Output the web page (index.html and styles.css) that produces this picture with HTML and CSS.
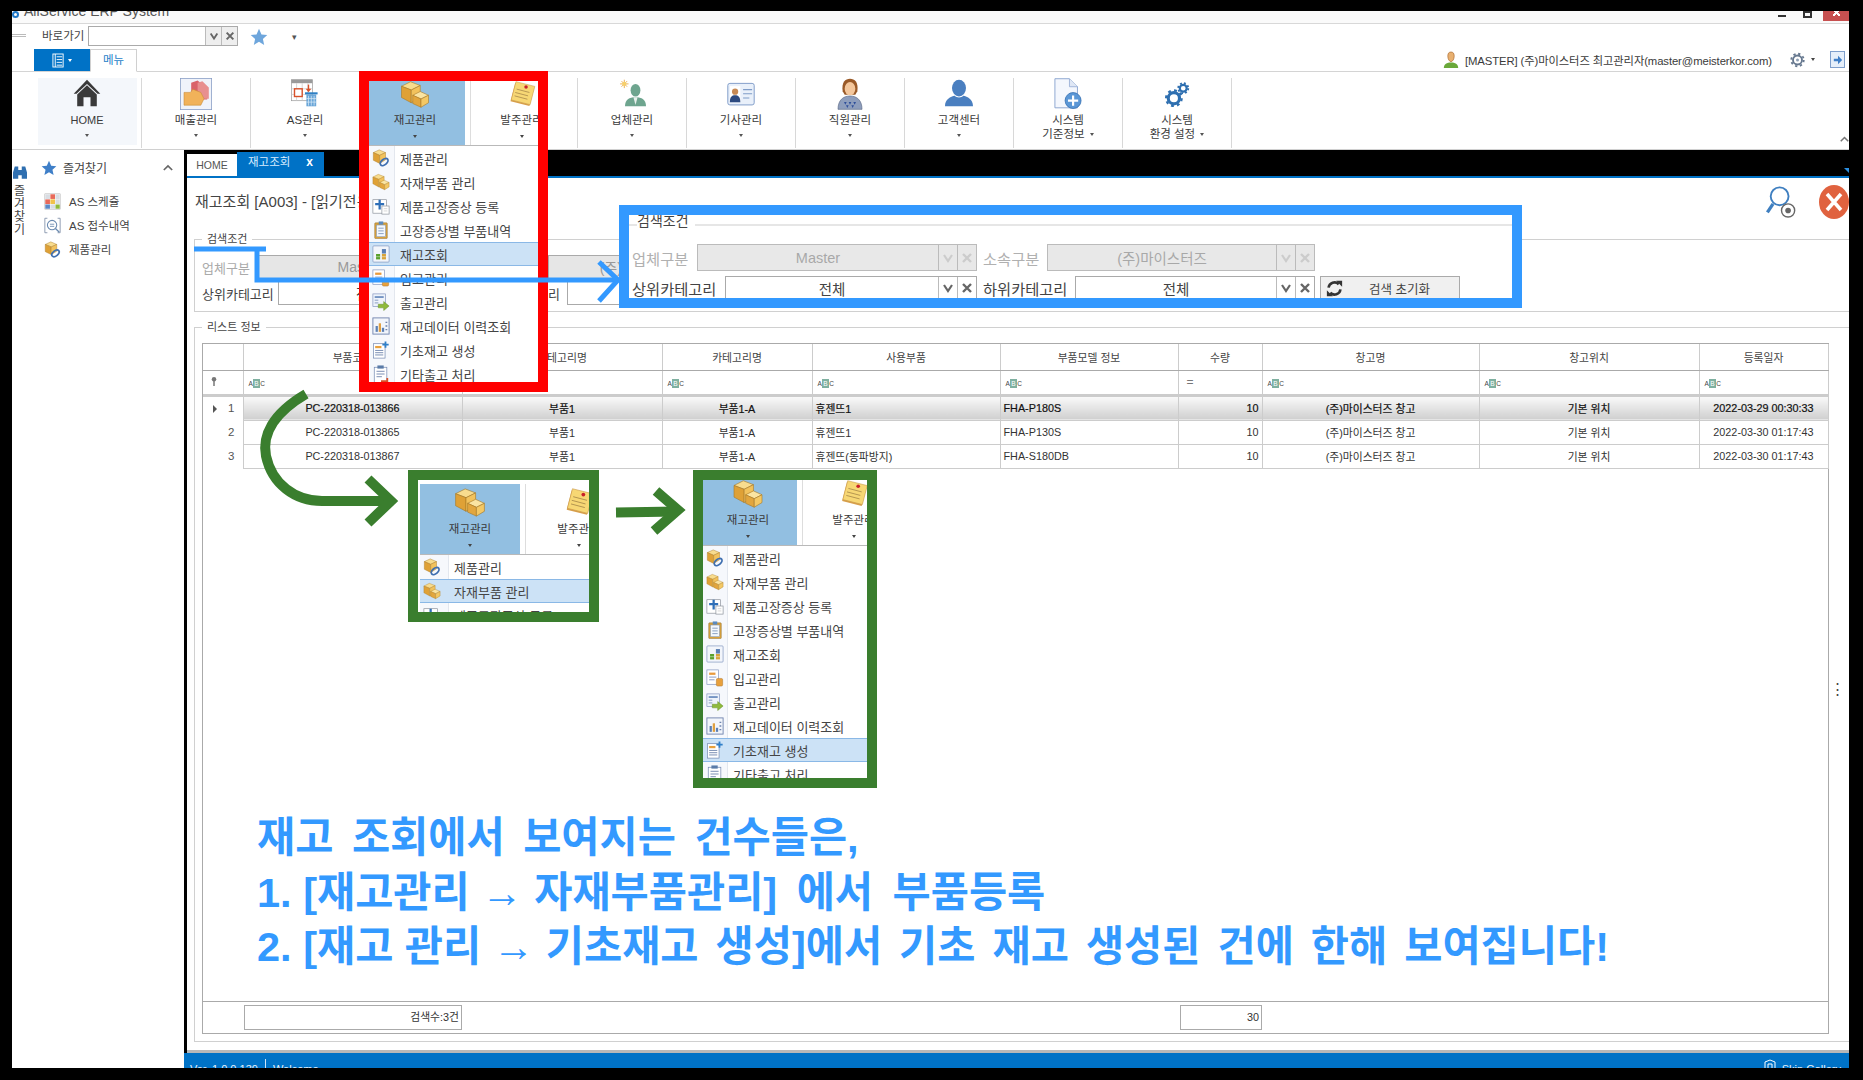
FILE: index.html
```html
<!DOCTYPE html>
<html lang="ko">
<head>
<meta charset="utf-8">
<title>AllService ERP System</title>
<link rel="stylesheet" href="styles.css">
</head>
<body>
<svg class="defs" aria-hidden="true">
  <symbol id="boxes" viewBox="0 0 40 36">
    <polygon points="14,1 27,6 15,12 2,7" fill="#f8dc8e" stroke="#a97a28" stroke-width=".8"/>
    <polygon points="2,7 15,12 15,29 2,22" fill="#dfa136" stroke="#a97a28" stroke-width=".8"/>
    <polygon points="15,12 27,6 27,22 15,29" fill="#f2c25c" stroke="#a97a28" stroke-width=".8"/>
    <polygon points="27,14 38,19 28,24 17,19" fill="#fae4a2" stroke="#a97a28" stroke-width=".8"/>
    <polygon points="17,19 28,24 28,35 17,30" fill="#e2a63e" stroke="#a97a28" stroke-width=".8"/>
    <polygon points="28,24 38,19 38,29 28,35" fill="#f4c864" stroke="#a97a28" stroke-width=".8"/>
  </symbol>
  <symbol id="note" viewBox="0 0 40 40">
    <polygon points="10,3 38,10 31,37 3,30" fill="#d89f4a"/>
    <polygon points="11,1 39,8 32,35 4,28" fill="#f7d774" stroke="#c8964a" stroke-width=".8"/>
    <path d="M12 12l19 5M10 17l19 5M9 22l19 5" stroke="#a98a4a" stroke-width="1.2"/>
    <circle cx="26" cy="9" r="2.6" fill="#c8202a"/>
  </symbol>
  <symbol id="home" viewBox="0 0 40 40">
    <path d="M20 1L39 21h-4L20 7 5 21H1z" fill="#3a3a3a"/>
    <path d="M6 22L20 9l14 13v17H25V26H15v13H6z" fill="#3a3a3a"/>
  </symbol>
  <symbol id="sales" viewBox="0 0 40 40">
    <rect x=".5" y=".5" width="39" height="39" fill="#f0f3fa" stroke="#8b9fc6"/>
    <path d="M14 6l8-3 12 10v14H14z" fill="#d9636a"/>
    <path d="M22 6l6-2 8 8v14H22z" fill="#e88f8f"/>
    <path d="M5 18h8l3-4 10 4 4 8-4 8H5z" fill="#f1b25a" stroke="#c88a35" stroke-width=".7"/>
  </symbol>
  <symbol id="as" viewBox="0 0 40 40">
    <rect x=".5" y="1" width="30" height="30" fill="#fff" stroke="#9a9a9a"/>
    <rect x=".5" y="1" width="30" height="5" fill="#9a9a9a"/>
    <path d="M8 6v25M16 6v25M24 6v25M1 14h29M1 22h29" stroke="#c8c8c8"/>
    <rect x="5" y="14" width="11" height="11" fill="#fff" stroke="#d8512a" stroke-width="2"/>
    <path d="M25 8v8" stroke="#d8512a" stroke-width="2"/>
    <polygon points="21,14 29,14 25,19" fill="#d8512a"/>
    <rect x="20" y="19" width="18" height="3" fill="#2d7fc4"/>
    <rect x="22" y="22" width="14" height="17" fill="#6aa6d8"/>
    <path d="M25 24v14M29 24v14M33 24v14M22 28h14M22 33h14" stroke="#dcecf8"/>
  </symbol>
  <symbol id="biz" viewBox="0 0 40 40">
    <path d="M9 1v12M3 7h12M5 3l8 8M13 3l-8 8" stroke="#e9a33d" stroke-width="1.2"/>
    <circle cx="9" cy="7" r="3" fill="#f6d06b"/>
    <ellipse cx="25" cy="16" rx="7" ry="9" fill="#6ea58f"/>
    <path d="M10 39c0-10 6-13 15-13s15 3 15 13z" fill="#6ea58f"/>
    <path d="M22 26h6l-3 11z" fill="#e8f0ec"/>
  </symbol>
  <symbol id="driver" viewBox="0 0 40 36">
    <rect x="1" y="2" width="38" height="31" rx="3" fill="#e9f0fa" stroke="#7f9cc8" stroke-width="1.4"/>
    <rect x="4" y="6" width="15" height="23" fill="#fff"/>
    <circle cx="11.500" cy="14" r="4.500" fill="#c78a55"/>
    <path d="M4 29c0-8 3-10 7.500-10S19 21 19 29z" fill="#2d4a80"/>
    <path d="M23 11h13M23 17h13M23 23h9" stroke="#7f9cc8" stroke-width="1.5"/>
  </symbol>
  <symbol id="staff" viewBox="0 0 40 48">
    <path d="M9 20C7 6 13 1 20 1s13 5 11 19l-3 5H12z" fill="#9a5a28"/>
    <ellipse cx="20" cy="16" rx="8" ry="10" fill="#f4c79c"/>
    <path d="M2 47c0-14 8-20 18-20s18 6 18 20z" fill="#8d9dbc" stroke="#5c6a86"/>
    <path d="M11 36l2 4 2-4zm7 0l2 4 2-4zm7 0l2 4 2-4zM14 41l2 4 2-4zm8 0l2 4 2-4z" fill="#2f4f9a"/>
  </symbol>
  <symbol id="customer" viewBox="0 0 40 40">
    <ellipse cx="20" cy="13" rx="10" ry="12" fill="#4a7fc0"/>
    <path d="M0 39c0-10 8-14 14-15 2 3 10 3 12 0 6 1 14 5 14 15z" fill="#4a7fc0"/>
  </symbol>
  <symbol id="sysdoc" viewBox="0 0 40 44">
    <path d="M2 1h20l11 11v29H2z" fill="#f4f7fd" stroke="#8ba4cf" stroke-width="1.300"/>
    <path d="M22 1v11h11" fill="#dfe7f5" stroke="#8ba4cf"/>
    <circle cx="27" cy="31" r="11" fill="#5b97d6" stroke="#2f6aae"/>
    <path d="M27 24v14M20 31h14" stroke="#fff" stroke-width="3"/>
  </symbol>
  <symbol id="gears" viewBox="0 0 40 40">
    <circle cx="15" cy="26" r="9" fill="none" stroke="#2e6fb0" stroke-width="5"/>
    <circle cx="15" cy="26" r="12.500" fill="none" stroke="#2e6fb0" stroke-width="3.500" stroke-dasharray="4.500 5.300"/>
    <circle cx="30" cy="10" r="5.500" fill="none" stroke="#2e6fb0" stroke-width="3.500"/>
    <circle cx="30" cy="10" r="8" fill="none" stroke="#2e6fb0" stroke-width="3" stroke-dasharray="3 3.300"/>
  </symbol>
  <symbol id="box-link" viewBox="0 0 40 40">
    <polygon points="16,2 30,8 17,14 3,8" fill="#f8dc8e" stroke="#a97a28"/>
    <polygon points="3,8 17,14 17,32 3,25" fill="#dfa136" stroke="#a97a28"/>
    <polygon points="17,14 30,8 30,24 17,32" fill="#f2c25c" stroke="#a97a28"/>
    <ellipse cx="27" cy="29" rx="10" ry="6" transform="rotate(-40 27 29)" fill="none" stroke="#3f6fb0" stroke-width="4"/>
  </symbol>
  <symbol id="add-grid" viewBox="0 0 40 40">
    <rect x="2" y="6" width="30" height="30" fill="#fff" stroke="#8a8f99" stroke-width="1.500"/>
    <rect x="22" y="20" width="16" height="18" fill="#fff" stroke="#8a8f99" stroke-width="1.500"/>
    <path d="M26 26h8M26 31h8" stroke="#a8a8a8"/>
    <path d="M17 6v22M7 16h20" stroke="#2f6fb8" stroke-width="5"/>
  </symbol>
  <symbol id="clip" viewBox="0 0 40 40">
    <rect x="6" y="4" width="28" height="35" rx="2" fill="#d9a23c" stroke="#8a6a2a"/>
    <rect x="10" y="9" width="20" height="26" fill="#f4f8fd" stroke="#6e8bb5"/>
    <rect x="15" y="1" width="10" height="7" fill="#5a8ac0"/>
    <path d="M14 16h12M14 22h12M14 28h12" stroke="#5a7ba8" stroke-width="1.500"/>
  </symbol>
  <symbol id="stock" viewBox="0 0 40 40">
    <rect x="2" y="2" width="36" height="36" rx="2" fill="#f2f5fb" stroke="#7f93bd" stroke-width="1.500"/>
    <rect x="9" y="20" width="9" height="12" fill="#5aa02c"/>
    <rect x="22" y="9" width="9" height="10" fill="#5b7fb4"/>
    <rect x="22" y="20" width="9" height="12" fill="#d8a33a"/>
    <path d="M9 26h9M22 26h9" stroke="#fff"/>
  </symbol>
  <symbol id="inbound" viewBox="0 0 40 40">
    <rect x="2" y="2" width="26" height="32" fill="#fff" stroke="#7f93bd" stroke-width="1.500"/>
    <rect x="7" y="8" width="14" height="5" fill="#e89a3c"/>
    <path d="M7 18h16M7 24h12" stroke="#7f93bd" stroke-width="2"/>
    <rect x="23" y="21" width="14" height="17" rx="3" fill="#e8a03c" stroke="#a86e20"/>
  </symbol>
  <symbol id="outbound" viewBox="0 0 40 40">
    <rect x="2" y="2" width="28" height="28" fill="#eef3fb" stroke="#7f93bd" stroke-width="1.500"/>
    <rect x="6" y="7" width="20" height="4" fill="#6f8fc0"/>
    <path d="M6 16h8M6 22h8" stroke="#7f93bd" stroke-width="2"/>
    <path d="M14 25h12v-6l12 10-12 10v-6H14z" fill="#8fba3c" stroke="#5f8a20"/>
  </symbol>
  <symbol id="chart" viewBox="0 0 40 40">
    <rect x="2" y="2" width="36" height="36" fill="#f2f5fb" stroke="#6e83ad" stroke-width="2"/>
    <rect x="8" y="20" width="5" height="13" fill="#5b7fb4"/>
    <rect x="15" y="14" width="5" height="19" fill="#e0a040"/>
    <rect x="22" y="24" width="5" height="9" fill="#5b7fb4"/>
    <path d="M30 12h4M30 20h4M30 28h4" stroke="#6e83ad" stroke-width="3"/>
  </symbol>
  <symbol id="newdoc" viewBox="0 0 40 40">
    <rect x="3" y="6" width="26" height="32" fill="#fff" stroke="#6e83ad" stroke-width="1.500"/>
    <rect x="7" y="11" width="14" height="5" fill="#e8a03c"/>
    <path d="M7 21h18M7 26h18M7 31h18" stroke="#6e83ad" stroke-width="2"/>
    <path d="M30 1v14M23 8h14" stroke="#2f7fc8" stroke-width="4"/>
  </symbol>
  <symbol id="etcdoc" viewBox="0 0 40 40">
    <rect x="5" y="5" width="28" height="34" fill="#fff" stroke="#6e83ad" stroke-width="1.500"/>
    <rect x="12" y="1" width="14" height="7" fill="#5a7ba8"/>
    <path d="M10 14h18M10 20h18M10 26h12" stroke="#6e83ad" stroke-width="2"/>
    <path d="M20 36h14v-7" fill="none" stroke="#d8512a" stroke-width="4"/>
  </symbol>
  <symbol id="cal" viewBox="0 0 40 40">
    <rect x="2" y="2" width="36" height="36" fill="#fff" stroke="#9a9a9a"/>
    <rect x="3" y="3" width="11" height="11" fill="#d9dde3"/><rect x="15" y="3" width="11" height="11" fill="#e86a5a"/><rect x="27" y="3" width="10" height="11" fill="#d9dde3"/>
    <rect x="3" y="15" width="11" height="11" fill="#e86a5a"/><rect x="15" y="15" width="11" height="11" fill="#f2c24a"/><rect x="27" y="15" width="10" height="11" fill="#d9dde3"/>
    <rect x="3" y="27" width="11" height="10" fill="#5a8ac8"/><rect x="15" y="27" width="11" height="10" fill="#d9dde3"/><rect x="27" y="27" width="10" height="10" fill="#8fba3c"/>
  </symbol>
  <symbol id="recv" viewBox="0 0 40 40">
    <path d="M8 3H2v34h6M32 3h6v34h-6" fill="none" stroke="#7f8fa8" stroke-width="2"/>
    <circle cx="19" cy="19" r="11" fill="#fff" stroke="#6a8ab0" stroke-width="2.500"/>
    <path d="M14 17h10M14 22h10" stroke="#6a8ab0" stroke-width="2"/>
    <path d="M27 27l9 9" stroke="#6a8ab0" stroke-width="3"/>
  </symbol>
  <symbol id="star" viewBox="0 0 24 24">
    <polygon points="12,1 15.300,8.500 23,9.300 17.200,14.600 18.900,22.500 12,18.400 5.100,22.500 6.800,14.600 1,9.300 8.700,8.500" fill="currentColor"/>
  </symbol>
  <symbol id="chev" viewBox="0 0 12 12">
    <path d="M2 3l4 6 4-6" fill="none" stroke="currentColor" stroke-width="2.200"/>
  </symbol>
  <symbol id="cross" viewBox="0 0 12 12">
    <path d="M2 2l8 8M10 2l-8 8" fill="none" stroke="currentColor" stroke-width="2.400"/>
  </symbol>
  <symbol id="refresh" viewBox="0 0 20 20">
    <path d="M3 9a7 7 0 0 1 12-4" fill="none" stroke="#333" stroke-width="3"/>
    <polygon points="12,1 19,1 19,8" fill="#333"/>
    <path d="M17 11a7 7 0 0 1-12 4" fill="none" stroke="#333" stroke-width="3"/>
    <polygon points="8,19 1,19 1,12" fill="#333"/>
  </symbol>
</svg>

<div class="screen">
  <header class="titlebar">
    <span class="app-dot"></span>
    <span class="app-name">AllService ERP System</span>
    <span class="win-min"></span>
    <span class="win-max"></span>
    <span class="win-close"></span>
  </header>

  <div class="quick">
    <span class="grip"></span>
    <span class="quick-label">바로가기</span>
    <div class="quick-combo">
      <span class="quick-input"></span>
      <span class="quick-btn"><svg class="ico-10"><use href="#chev"/></svg></span>
      <span class="quick-btn"><svg class="ico-10"><use href="#cross"/></svg></span>
    </div>
    <svg class="quick-star"><use href="#star"/></svg>
    <span class="quick-more">▾</span>
  </div>

  <div class="tabbar">
    <span class="tab-app">
      <svg class="tab-app-ico" viewBox="0 0 14 16"><rect x="1" y="1" width="11" height="14" fill="none" stroke="#fff"/><path d="M3.500 1v14M5 4h6M5 7h6M5 10h6M5 13h6" stroke="#fff"/></svg>
      <i class="tab-app-arrow"></i>
    </span>
    <span class="tab-menu">메뉴</span>
    <div class="userbox">
      <svg class="user-ico" viewBox="0 0 20 22"><path d="M6 6c0-4 2-5 4-5s4 1 4 5-2 7-4 7-4-3-4-7z" fill="#e8b070" stroke="#a8662a" stroke-width=".8"/><path d="M1 21c0-5 4-7 9-7s9 2 9 7z" fill="#6aa83a"/></svg>
      <span class="user-text">[MASTER] (주)마이스터즈 최고관리자(master@meisterkor.com)</span>
      <svg class="gear-ico" viewBox="0 0 20 20"><circle cx="10" cy="10" r="6" fill="none" stroke="#66788f" stroke-width="2.500"/><circle cx="10" cy="10" r="8.300" fill="none" stroke="#66788f" stroke-width="2.500" stroke-dasharray="3 3.500"/><circle cx="10" cy="10" r="2" fill="#8fa0b5"/></svg>
      <i class="gear-arrow"></i>
      <span class="login-btn"><svg class="login-ico" viewBox="0 0 12 12"><path d="M1 4.500h5V1l5 5-5 5V7.500H1z" fill="#3f7fc8"/></svg></span>
    </div>
  </div>

  <nav class="ribbon">
    <div class="rib-item rib-home"><svg class="rib-ico rib-ico-m"><use href="#home"/></svg><span class="rib-label">HOME</span><i class="rib-arrow"></i></div>
    <div class="rib-item"><svg class="rib-ico"><use href="#sales"/></svg><span class="rib-label">매출관리</span><i class="rib-arrow"></i></div>
    <div class="rib-item"><svg class="rib-ico rib-ico-m"><use href="#as"/></svg><span class="rib-label">AS관리</span><i class="rib-arrow"></i></div>
    <div class="rib-item"></div>
    <div class="rib-item"></div>
    <div class="rib-item"><svg class="rib-ico rib-ico-m"><use href="#biz"/></svg><span class="rib-label">업체관리</span><i class="rib-arrow"></i></div>
    <div class="rib-item"><svg class="rib-ico rib-ico-s"><use href="#driver"/></svg><span class="rib-label">기사관리</span><i class="rib-arrow"></i></div>
    <div class="rib-item"><svg class="rib-ico"><use href="#staff"/></svg><span class="rib-label">직원관리</span><i class="rib-arrow"></i></div>
    <div class="rib-item"><svg class="rib-ico rib-ico-m"><use href="#customer"/></svg><span class="rib-label">고객센터</span><i class="rib-arrow"></i></div>
    <div class="rib-item"><svg class="rib-ico"><use href="#sysdoc"/></svg><span class="rib-label">시스템</span><span class="rib-label">기준정보 <i class="rib-arrow-in"></i></span></div>
    <div class="rib-item"><svg class="rib-ico rib-ico-s"><use href="#gears"/></svg><span class="rib-label">시스템</span><span class="rib-label">환경 설정 <i class="rib-arrow-in"></i></span></div>
    <svg class="rib-collapse" viewBox="0 0 12 8"><path d="M1 7l5-5 5 5" fill="none" stroke="#777" stroke-width="2"/></svg>
  </nav>

  <div class="work">
    <aside class="side">
      <div class="side-strip">
        <svg class="binoc" viewBox="0 0 16 16"><path d="M0 15V8l2-7h4v14zM16 15V8l-2-7h-4v14zM6 5h4v6H6z" fill="#2f6fb0"/></svg>
        <span>즐</span><span>겨</span><span>찾</span><span>기</span>
      </div>
      <div class="side-panel">
        <div class="side-head">
          <svg class="side-star"><use href="#star"/></svg>
          <span class="side-title">즐겨찾기</span>
          <svg class="side-up" viewBox="0 0 12 8"><path d="M1 7l5-5 5 5" fill="none" stroke="#666" stroke-width="2"/></svg>
        </div>
        <ul class="side-list">
          <li><svg class="side-ico"><use href="#cal"/></svg>AS 스케쥴</li>
          <li><svg class="side-ico"><use href="#recv"/></svg>AS 접수내역</li>
          <li><svg class="side-ico"><use href="#box-link"/></svg>제품관리</li>
        </ul>
      </div>
    </aside>

    <main class="main">
      <div class="doc-tabs">
        <span class="doc-tab">HOME</span>
        <span class="doc-tab doc-tab-on">재고조회<b class="doc-x">x</b></span>
        <i class="doc-mark"></i>
      </div>
      <div class="pane">
        <div class="pane-head">
          <h1 class="pane-title">재고조회 [A003] - [읽기전용]</h1>
          <div class="pane-tools">
            <svg class="tool-search" viewBox="0 0 34 34"><circle cx="15" cy="11" r="9.500" fill="none" stroke="#3f7fc0" stroke-width="2"/><path d="M8 19L2 28" stroke="#3f7fc0" stroke-width="3.500"/><circle cx="24" cy="26" r="7" fill="#fff" stroke="#666" stroke-width="1.500"/><circle cx="24" cy="26" r="3" fill="#666"/></svg>
            <svg class="tool-close" viewBox="0 0 30 34"><ellipse cx="15" cy="17" rx="15" ry="17" fill="#e0623f"/><path d="M8 9l14 16M22 9L8 25" stroke="#fff" stroke-width="3.500"/></svg>
          </div>
        </div>

        <fieldset class="group">
          <legend>검색조건</legend>
          <div class="form-row">
            <label class="flabel flabel-off flabel-1">업체구분</label>
            <div class="fld fld-off fld-a"><span class="fld-val">Master</span><span class="fld-btn"><svg class="ico-10"><use href="#chev"/></svg></span><span class="fld-btn"><svg class="ico-10"><use href="#cross"/></svg></span></div>
            <label class="flabel flabel-2"></label>
            <div class="fld fld-off fld-b"><span class="fld-val">(주)마이스터즈</span></div>
          </div>
          <div class="form-row">
            <label class="flabel flabel-3">상위카테고리</label>
            <div class="fld fld-c"><span class="fld-val">전체</span><span class="fld-btn"><svg class="ico-10"><use href="#chev"/></svg></span><span class="fld-btn"><svg class="ico-10"><use href="#cross"/></svg></span></div>
            <label class="flabel flabel-4">하위카테고리</label>
            <div class="fld fld-d"></div>
          </div>
        </fieldset>

        <fieldset class="group group-list">
          <legend>리스트 정보</legend>
          <div class="grid">
            <table class="tbl">
              <colgroup>
                <col class="c0"><col class="c1"><col class="c2"><col class="c3"><col class="c4"><col class="c5"><col class="c6"><col class="c7"><col class="c8"><col class="c9">
              </colgroup>
              <thead>
                <tr class="tr-head"><th></th><th>부품코드</th><th>카테고리명</th><th>카테고리명</th><th>사용부품</th><th>부품모델 정보</th><th>수량</th><th>창고명</th><th>창고위치</th><th>등록일자</th></tr>
                <tr class="tr-filter">
                  <td class="key"><svg class="key-ico" viewBox="0 0 8 12"><circle cx="4" cy="3" r="3" fill="#777"/><path d="M4 5v7" stroke="#777" stroke-width="2"/></svg></td>
                  <td><span class="abc">A<b>B</b>C</span></td><td><span class="abc">A<b>B</b>C</span></td><td><span class="abc">A<b>B</b>C</span></td><td><span class="abc">A<b>B</b>C</span></td><td><span class="abc">A<b>B</b>C</span></td><td class="eq">=</td><td><span class="abc">A<b>B</b>C</span></td><td><span class="abc">A<b>B</b>C</span></td><td><span class="abc">A<b>B</b>C</span></td>
                </tr>
              </thead>
              <tbody>
                <tr class="tr-focus"><td class="rn"><i class="rn-arrow"></i>1</td><td class="ctr">PC-220318-013866</td><td class="ctr">부품1</td><td class="ctr">부품1-A</td><td>휴젠뜨1</td><td>FHA-P180S</td><td class="num">10</td><td class="ctr">(주)마이스터즈 창고</td><td class="ctr">기본 위치</td><td class="ctr">2022-03-29 00:30:33</td></tr>
                <tr><td class="rn">2</td><td class="ctr">PC-220318-013865</td><td class="ctr">부품1</td><td class="ctr">부품1-A</td><td>휴젠뜨1</td><td>FHA-P130S</td><td class="num">10</td><td class="ctr">(주)마이스터즈 창고</td><td class="ctr">기본 위치</td><td class="ctr">2022-03-30 01:17:43</td></tr>
                <tr><td class="rn">3</td><td class="ctr">PC-220318-013867</td><td class="ctr">부품1</td><td class="ctr">부품1-A</td><td>휴젠뜨(동파방지)</td><td>FHA-S180DB</td><td class="num">10</td><td class="ctr">(주)마이스터즈 창고</td><td class="ctr">기본 위치</td><td class="ctr">2022-03-30 01:17:43</td></tr>
              </tbody>
            </table>
            <div class="grid-foot">
              <span class="foot-count">검색수:3건</span>
              <span class="foot-sum">30</span>
            </div>
          </div>
        </fieldset>
      </div>
      <div class="status">
        <span class="st-ver">Ver. 1.0.0.139</span>
        <span class="st-msg">Welcome</span>
        <span class="st-skin"><svg class="st-ico" viewBox="0 0 12 14"><path d="M1 3l5-2 5 2v10H1z M4 13V5h4v8" fill="none" stroke="#fff"/></svg>Skin Gallery</span>
      </div>
    </main>
  </div>
</div>

<!-- 주석 레이어: 스크린샷 위에 그린 안내 표시 -->
<section class="pop pop-red">
  <div class="pop-tiles">
    <div class="tile tile-on"><svg class="tile-ico"><use href="#boxes"/></svg><span>재고관리</span><i class="rib-arrow"></i></div>
    <div class="tile"><svg class="tile-ico"><use href="#note"/></svg><span>발주관리</span><i class="rib-arrow"></i></div>
  </div>
  <ul class="menu">
    <li><svg class="mi"><use href="#box-link"/></svg><span>제품관리</span></li>
    <li><svg class="mi"><use href="#boxes"/></svg><span>자재부품 관리</span></li>
    <li><svg class="mi"><use href="#add-grid"/></svg><span>제품고장증상 등록</span></li>
    <li><svg class="mi"><use href="#clip"/></svg><span>고장증상별 부품내역</span></li>
    <li class="sel"><svg class="mi"><use href="#stock"/></svg><span>재고조회</span></li>
    <li><svg class="mi"><use href="#inbound"/></svg><span>입고관리</span></li>
    <li><svg class="mi"><use href="#outbound"/></svg><span>출고관리</span></li>
    <li><svg class="mi"><use href="#chart"/></svg><span>재고데이터 이력조회</span></li>
    <li><svg class="mi"><use href="#newdoc"/></svg><span>기초재고 생성</span></li>
    <li><svg class="mi"><use href="#etcdoc"/></svg><span>기타출고 처리</span></li>
  </ul>
</section>

<section class="pop pop-g1">
  <div class="pop-tiles">
    <div class="tile tile-on"><svg class="tile-ico"><use href="#boxes"/></svg><span>재고관리</span><i class="rib-arrow"></i></div>
    <div class="tile"><svg class="tile-ico"><use href="#note"/></svg><span>발주관리</span><i class="rib-arrow"></i></div>
  </div>
  <ul class="menu">
    <li><svg class="mi"><use href="#box-link"/></svg><span>제품관리</span></li>
    <li class="sel"><svg class="mi"><use href="#boxes"/></svg><span>자재부품 관리</span></li>
    <li><svg class="mi"><use href="#add-grid"/></svg><span>제품고장증상 등록</span></li>
  </ul>
</section>

<section class="pop pop-g2">
  <div class="pop-tiles">
    <div class="tile tile-on"><svg class="tile-ico"><use href="#boxes"/></svg><span>재고관리</span><i class="rib-arrow"></i></div>
    <div class="tile"><svg class="tile-ico"><use href="#note"/></svg><span>발주관리</span><i class="rib-arrow"></i></div>
  </div>
  <ul class="menu">
    <li><svg class="mi"><use href="#box-link"/></svg><span>제품관리</span></li>
    <li><svg class="mi"><use href="#boxes"/></svg><span>자재부품 관리</span></li>
    <li><svg class="mi"><use href="#add-grid"/></svg><span>제품고장증상 등록</span></li>
    <li><svg class="mi"><use href="#clip"/></svg><span>고장증상별 부품내역</span></li>
    <li><svg class="mi"><use href="#stock"/></svg><span>재고조회</span></li>
    <li><svg class="mi"><use href="#inbound"/></svg><span>입고관리</span></li>
    <li><svg class="mi"><use href="#outbound"/></svg><span>출고관리</span></li>
    <li><svg class="mi"><use href="#chart"/></svg><span>재고데이터 이력조회</span></li>
    <li class="sel"><svg class="mi"><use href="#newdoc"/></svg><span>기초재고 생성</span></li>
    <li><svg class="mi"><use href="#etcdoc"/></svg><span>기타출고 처리</span></li>
  </ul>
</section>

<section class="zoomform">
  <div class="zf-legend"><span>검색조건</span></div>
  <div class="zf-row">
    <label class="zf-label zf-off zf-l1">업체구분</label>
    <div class="zf-fld zf-fld-off zf-f1"><span class="fld-val">Master</span><span class="zf-btn"><svg class="ico-12"><use href="#chev"/></svg></span><span class="zf-btn"><svg class="ico-12"><use href="#cross"/></svg></span></div>
    <label class="zf-label zf-off zf-l2">소속구분</label>
    <div class="zf-fld zf-fld-off zf-f2"><span class="fld-val">(주)마이스터즈</span><span class="zf-btn"><svg class="ico-12"><use href="#chev"/></svg></span><span class="zf-btn"><svg class="ico-12"><use href="#cross"/></svg></span></div>
  </div>
  <div class="zf-row zf-row-b">
    <label class="zf-label zf-l3">상위카테고리</label>
    <div class="zf-fld zf-f3"><span class="fld-val">전체</span><span class="zf-btn"><svg class="ico-12"><use href="#chev"/></svg></span><span class="zf-btn"><svg class="ico-12"><use href="#cross"/></svg></span></div>
    <label class="zf-label zf-l4">하위카테고리</label>
    <div class="zf-fld zf-f4"><span class="fld-val">전체</span><span class="zf-btn"><svg class="ico-12"><use href="#chev"/></svg></span><span class="zf-btn"><svg class="ico-12"><use href="#cross"/></svg></span></div>
    <div class="zf-reset"><svg class="zf-ref"><use href="#refresh"/></svg><span>검색 초기화</span></div>
  </div>
</section>

<svg class="lines" viewBox="0 0 1863 1080">
  <path class="ln-green" d="M306 394C272 414 262 436 266 456C272 484 295 501 322 501L388 501"/>
  <path class="ln-green" d="M368 479L391 501L368 523"/>
  <path class="ln-green" d="M616 512.500L677 511.500"/>
  <path class="ln-green" d="M656 491L678 510L654 531"/>
  <path class="ln-blue" d="M194 249H266M257 249V280H618"/>
  <path class="ln-blue" d="M599 262L618 280L599 301"/>
</svg>

<div class="notice">
  <p class="n1">재고 조회에서 보여지는 건수들은,</p>
  <p class="n2"><span class="n-tight">1. [재고관리 → </span>자재부품관리] 에서 부품등록</p>
  <p class="n3"><span class="n-tight">2. [재고 관리 → </span>기초재고 생성]에서 기초 재고 생성된 건에 한해 보여집니다!</p>
</div>
<i class="dots">⋮</i>
</body>
</html>
```

FILE: styles.css
```css
* { box-sizing: border-box; }
html, body { margin: 0; padding: 0; }
body {
  position: relative;
  width: 1863px;
  height: 1080px;
  overflow: hidden;
  background: #000;
  font-family: "Liberation Sans", "Noto Sans CJK KR", sans-serif;
  font-size: 11px;
  color: #333;
}
ul { list-style: none; margin: 0; padding: 0; }
i { font-style: normal; }
.defs { position: absolute; width: 0; height: 0; }
.ico-10 { width: 10px; height: 10px; display: block; }
.ico-12 { width: 12px; height: 12px; display: block; }

.screen {
  width: 1863px;
  height: 1080px;
  padding: 11px 14px 12px 12px;
  display: flex;
  flex-direction: column;
  background: #000;
}

/* title bar */
.titlebar {
  height: 13px;
  flex: none;
  display: flex;
  align-items: flex-start;
  background: #fafafa;
  border-bottom: 1px solid #d8d8d8;
  overflow: hidden;
  position: relative;
}
.app-dot { width: 7px; height: 7px; margin-right: 5px; border-radius: 50%; border: 2px solid #1f78c8; flex: none; }
.app-name { font-size: 14px; line-height: 14px; margin-top: -7px; color: #555; }
.win-min { margin-left: auto; width: 8px; height: 2px; background: #333; margin-top: 4px; }
.win-max { width: 9px; height: 7px; border: 2px solid #333; margin-left: 17px; }
.win-close { width: 26px; height: 10px; margin-left: 11px; background: #c75050; position: relative; }
.win-close::before { content: ""; position: absolute; left: 10px; top: -2px; width: 7px; height: 7px; background: linear-gradient(45deg, transparent 42%, #fff 42%, #fff 58%, transparent 58%), linear-gradient(-45deg, transparent 42%, #fff 42%, #fff 58%, transparent 58%); }

/* quick access */
.quick {
  height: 25px;
  flex: none;
  display: flex;
  align-items: center;
  background: #fff;
}
.grip { width: 14px; height: 3px; border-top: 1px solid #bbb; border-bottom: 1px solid #bbb; margin-right: 16px; margin-top: -3px; }
.quick-label { font-size: 11.500px; width: 46px; color: #444; margin-top: -3px; }
.quick-combo { display: flex; width: 150px; height: 20px; border: 1px solid #aaa; margin-top: -1px; }
.quick-input { flex: 1; }
.quick-btn { width: 16px; border-left: 1px solid #bbb; background: #eee; color: #666; display: flex; align-items: center; justify-content: center; }
.quick-star { width: 18px; height: 18px; margin-left: 12px; color: #6ea6dc; }
.quick-more { font-size: 9px; margin-left: 24px; color: #555; }

/* tabs */
.tabbar {
  height: 23px;
  flex: none;
  display: flex;
  align-items: stretch;
  padding-left: 22px;
  background: #fff;
  border-bottom: 1px solid #d4d4d4;
}
.tab-app { width: 56px; background: #0072c6; display: flex; align-items: center; justify-content: center; gap: 3px; }
.tab-app-ico { width: 13px; height: 15px; }
.tab-app-arrow, .gear-arrow, .rib-arrow, .rib-arrow-in { width: 0; height: 0; border-left: 2.500px solid transparent; border-right: 2.500px solid transparent; border-top: 3px solid #fff; display: inline-block; }
.tab-menu { width: 47px; height: 23px; border: 1px solid #d0d0d0; border-bottom: 1px solid #fff; text-align: center; color: #1f7fc8; font-size: 11.500px; line-height: 20px; }
.userbox { margin-left: auto; display: flex; align-items: center; padding-right: 4px; padding-bottom: 1px; }
.user-ico { width: 16px; height: 18px; margin-right: 6px; }
.user-text { font-size: 11.300px; color: #3a3a3a; letter-spacing: -.1px; white-space: nowrap; }
.gear-ico { width: 15px; height: 16px; margin-left: 18px; }
.gear-arrow { border-top-color: #444; margin-left: 6px; }
.login-btn { width: 15px; height: 17px; margin-left: 15px; background: #e6effa; border: 1px solid #7f9fcc; display: flex; align-items: center; justify-content: center; }
.login-ico { width: 10px; height: 10px; }

/* ribbon */
.ribbon {
  height: 78px;
  flex: none;
  display: flex;
  padding-left: 21px;
  background: #fff;
  border-bottom: 1px solid #d0d0d0;
  position: relative;
}
.rib-item {
  width: 109px;
  height: 70px;
  margin-top: 6px;
  border-right: 1px solid #d8d8d8;
  display: flex;
  flex-direction: column;
  align-items: center;
  font-size: 11.500px;
  color: #3a3a3a;
}
.rib-home { background: linear-gradient(#f4f7fb, #f4f7fb) no-repeat 5px -3px / 99px 70px; font-size: 11px; }
.rib-ico { width: 32px; height: 32px; flex: none; margin-bottom: 3px; }
.rib-ico-m { height: 28px; margin: 1px 0 6px; }
.rib-ico-s { height: 25px; margin: 4px 0 6px; }
.rib-label { line-height: 14px; margin-top: 0; white-space: nowrap; }
.rib-arrow { border-top-color: #555; margin-top: 7px; }
.rib-arrow-in { border-top-color: #555; vertical-align: middle; margin-left: 2px; }
.rib-collapse { position: absolute; right: 0; top: 64px; width: 9px; height: 6px; }

/* work */
.work { flex: 1; min-height: 0; display: flex; }
.side { width: 172px; flex: none; display: flex; background: #fff; }
.side-strip { width: 15px; flex: none; display: flex; flex-direction: column; align-items: center; padding-top: 15px; font-size: 12px; line-height: 13px; color: #444; }
.binoc { width: 14px; height: 15px; margin-bottom: 5px; }
.side-panel { flex: 1; }
.side-head { display: flex; align-items: center; height: 34px; padding: 1px 11px 0 14px; }
.side-star { width: 16px; height: 16px; margin-right: 6px; color: #3f7fc8; }
.side-title { font-size: 12px; color: #444; }
.side-up { width: 10px; height: 7px; margin-left: auto; }
.side-list { padding: 5px 0 0 17px; }
.side-list li { height: 24px; display: flex; align-items: center; font-size: 11.500px; color: #444; }
.side-ico { width: 17px; height: 17px; margin-right: 8px; }

/* main */
.main { flex: 1; min-width: 0; display: flex; flex-direction: column; background: #000; }
.doc-tabs { height: 26px; flex: none; padding-left: 3px; display: flex; align-items: flex-end; position: relative; }
.doc-tab { width: 50px; height: 22px; background: #fff; color: #555; text-align: center; font-size: 10.500px; line-height: 22px; }
.doc-tab-on { width: 87px; height: 24px; background: #0072c6; color: #dbeeff; font-size: 11.500px; line-height: 21px; }
.doc-x { color: #fff; margin-left: 16px; font-size: 12px; }
.doc-mark { position: absolute; right: 0; bottom: 3px; border-left: 5px solid transparent; border-top: 5px solid #2b8fe0; }
.pane {
  flex: 1;
  min-height: 0;
  margin-left: 3px;
  padding-left: 7px;
  background: #fff;
  border-top: 2px solid #0072c6;
  border-bottom: 3px solid #b8b8b8;
  overflow: hidden;
}
.pane-head { height: 54px; display: flex; justify-content: space-between; align-items: flex-start; padding-top: 15px; }
.pane-title { margin: 0; font-size: 15px; font-weight: 400; line-height: 18px; color: #444; padding-left: 1px; white-space: nowrap; }
.pane-tools { display: flex; align-items: flex-start; margin-top: -8px; }
.tool-search { width: 33px; height: 32px; margin-top: 1px; }
.tool-close { width: 30px; height: 34px; margin-left: 21px; display: block; }

.group {
  margin: 0 0 8px;
  min-width: 0;
  padding: 9px 0 4px 7px;
  border: 1px solid #d0d0d0;
  border-right: 0;
}
.group legend { margin-left: 0; padding: 0 5px; font-size: 11px; line-height: 14px; color: #444; }
.form-row { height: 24px; margin-bottom: 2px; display: flex; align-items: stretch; font-size: 14px; }
.flabel { display: flex; align-items: center; white-space: nowrap; color: #444; font-size: 13px; }
.flabel-off { color: #aaa; }
.flabel-1 { width: 56px; }
.flabel-2 { width: 50px; }
.flabel-3 { width: 76px; }
.flabel-4 { width: 62px; justify-content: flex-end; margin-right: 7px; }
.fld { display: flex; border: 1px solid #aaa; background: #fff; }
.fld-off { background: #e6e6e6; color: #999; }
.fld-a { width: 240px; }
.fld-b { width: 190px; }
.fld-c { width: 220px; }
.fld-d { width: 100px; }
.fld-val { flex: 1; text-align: center; align-self: center; }
.fld-btn { width: 19px; border-left: 1px solid #bbb; display: flex; align-items: center; justify-content: center; color: #666; }

.group-list { margin-bottom: 0; padding-bottom: 7px; }
.grid { width: 1627px; height: 691px; display: flex; flex-direction: column; border: 1px solid #aaa; margin-top: 0; }
.tbl { width: 1625px; table-layout: fixed; border-collapse: collapse; font-size: 10.800px; color: #333; }
.c0 { width: 40px; } .c1 { width: 219px; } .c2 { width: 200px; } .c3 { width: 150px; }
.c4 { width: 188px; } .c5 { width: 178px; } .c6 { width: 84px; } .c7 { width: 217px; }
.c8 { width: 220px; } .c9 { width: 129px; }
.tbl th, .tbl td { padding: 0 3px; border-right: 1px solid #ccc; white-space: nowrap; overflow: hidden; }
.tbl th { height: 26px; font-weight: 400; text-align: center; border-bottom: 1px solid #aaa; color: #444; }
.tr-filter td { height: 25px; border-bottom: 3px solid #ccc; }
.abc { font-size: 6.500px; color: #444; letter-spacing: .5px; padding-left: 2px; }
.abc b { background: #7fb0a0; color: #fff; padding: 1px; font-weight: 400; }
.key { text-align: left; padding-left: 8px !important; }
.key-ico { width: 6px; height: 9px; }
.eq { color: #777; font-size: 12px; padding-left: 8px !important; }
.tbl tbody td { height: 24px; border-bottom: 1px solid #ccc; }
.tbl tbody .tr-focus td { height: 25px; }
.tbl tbody td.rn { border-bottom: 0; text-align: right; padding-right: 8px; font-size: 11.500px; background: #fff; color: #555; }
.rn-arrow { float: left; margin: 3px 0 0 7px; border-left: 4px solid #555; border-top: 4px solid transparent; border-bottom: 4px solid transparent; }
.tr-focus td { background: linear-gradient(#fafafa, #cfcfcf); color: #111; font-weight: 400; -webkit-text-stroke: .2px #111; }
.tr-focus td.rn { -webkit-text-stroke: 0; }
.ctr { text-align: center; }
.num { text-align: right; }
.grid-foot { margin-top: auto; height: 32px; border-top: 1px solid #aaa; display: flex; align-items: center; padding-left: 41px; }
.foot-count, .foot-sum { height: 25px; border: 1px solid #aaa; text-align: right; line-height: 23px; padding-right: 2px; font-size: 10.800px; }
.foot-count { width: 218px; }
.foot-sum { width: 82px; margin-left: 718px; }

.status { height: 15px; flex: none; background: #0072c6; color: #e8f2fb; font-size: 11px; display: flex; overflow: hidden; padding: 10px 0 0 6px; line-height: 13px; }
.st-ver { padding-right: 7px; border-right: 1px solid #cfe4f6; height: 13px; margin-top: -4px; padding-top: 4px; }
.st-msg { padding-left: 7px; }
.st-skin { margin-left: auto; display: flex; padding-right: 8px; }
.st-ico { width: 12px; height: 14px; margin: -4px 6px 0 0; }

/* annotation layer */
.pop {
  position: absolute;
  z-index: 3;
  background: #fff;
  border: 10px solid;
  overflow: hidden;
  --tile-h: 64px;
  --tile-w: 96px;
  --gutter: 25px;
}
.pop-red { left: 359px; top: 71px; width: 189px; height: 321px; border-color: #f00; }
.pop-g1 { left: 408px; top: 470px; width: 191px; height: 152px; border-color: #3a7e2e; padding: 4px 0 0 2px; --tile-h: 70px; --tile-w: 100px; --gutter: 28px; }
.pop-g2 { left: 693px; top: 470px; width: 184px; height: 318px; border-color: #3a7e2e; --tile-h: 65px; --tile-w: 94px; --gutter: 24px; }
.pop-tiles { display: flex; height: var(--tile-h); }
.tile { flex: none; display: flex; flex-direction: column; align-items: center; justify-content: flex-end; width: var(--tile-w); font-size: 11.500px; color: #3a3a3a; padding: 0 4px 7px 0; }
.pop-g1 .tile { padding-right: 0; }
.tile + .tile { width: 106px; margin-left: 5px; border-left: 1px solid #ddd; }
.tile-on { background: #92bfe1; }
.tile-ico { width: 32px; height: 29px; margin-bottom: 5px; }
.tile span { line-height: 14px; white-space: nowrap; }
.tile .rib-arrow { border-top-color: #444; margin-top: 8px; }
.menu { border-top: 1px solid #b9b9b9; }
.menu li { height: 24px; display: flex; align-items: center; font-size: 13px; color: #444; background: linear-gradient(90deg, #f6f8fc var(--gutter), #e3e7ee var(--gutter), #e3e7ee calc(var(--gutter) + 1px), #fff calc(var(--gutter) + 1px)); white-space: nowrap; }
.menu li.sel { background: #cce2f6; box-shadow: inset 0 1px 0 #8ab8e6, inset 0 -1px 0 #8ab8e6; }
.mi { width: 18px; height: 18px; margin: 0 0 0 3px; flex: none; }
.menu span { margin-left: calc(var(--gutter) - 15px); }

.zoomform {
  position: absolute;
  z-index: 3;
  left: 619px;
  top: 205px;
  width: 903px;
  height: 103px;
  background: #fff;
  border: 10px solid #39f;
  overflow: hidden;
  font-size: 14.500px;
  color: #444;
}
.zf-legend { height: 29px; padding: 0 0 0 8px; background: linear-gradient(#e6e6e6, #e6e6e6) no-repeat 0 9px / 100% 2px; }
.zf-legend span { background: #fff; padding: 0 6px 0 0; font-size: 14px; line-height: 14px; display: inline-block; margin-top: -1px; vertical-align: top; }
.zf-row { height: 27px; margin-bottom: 5px; display: flex; padding-left: 3px; }
.zf-row-b { height: 24px; margin-bottom: 0; }
.zf-label { width: 64px; display: flex; align-items: center; white-space: nowrap; font-size: 15.300px; }
.zf-off { color: #b0b0b0; }
.zf-l1 { width: 65px; }
.zf-l2 { width: 70px; padding-left: 6px; }
.zf-l3 { width: 93px; }
.zf-l4 { width: 98px; padding-left: 6px; }
.zf-fld { display: flex; border: 1px solid #aaa; background: #fff; }
.zf-fld-off { background: #e8e8e8; color: #a8a8a8; border-color: #bbb; }
.zf-f1 { width: 280px; }
.zf-f2 { width: 268px; }
.zf-f3 { width: 252px; }
.zf-f4 { width: 240px; }
.zf-btn { width: 19px; border-left: 1px solid #bbb; display: flex; align-items: center; justify-content: center; color: #666; }
.zf-fld-off .zf-btn { color: #ccc; }
.zf-reset { width: 140px; margin-left: 5px; border: 1px solid #aaa; background: #f0f0f0; display: flex; align-items: center; font-size: 12.500px; }
.zf-ref { width: 17px; height: 17px; margin-left: 5px; }
.zf-reset span { margin-left: 26px; }

.lines { position: absolute; z-index: 4; left: 0; top: 0; width: 1863px; height: 1080px; pointer-events: none; }
.ln-green { fill: none; stroke: #3a7e2e; stroke-width: 10; }
.ln-blue { fill: none; stroke: #39f; stroke-width: 5; }

.notice {
  position: absolute;
  z-index: 2;
  left: 257px;
  top: 811px;
  color: #39f;
  font-size: 41.500px;
  font-weight: 700;
  line-height: 54.500px;
  white-space: nowrap;
}
.notice p { margin: 0; }
.n1 { word-spacing: 7px; }
.n2 { word-spacing: 8px; }
.n3 { word-spacing: 5.500px; }
.n-tight { word-spacing: 0; }
.dots { position: absolute; z-index: 2; left: 1830px; top: 680px; font-size: 15px; color: #444; }
```
